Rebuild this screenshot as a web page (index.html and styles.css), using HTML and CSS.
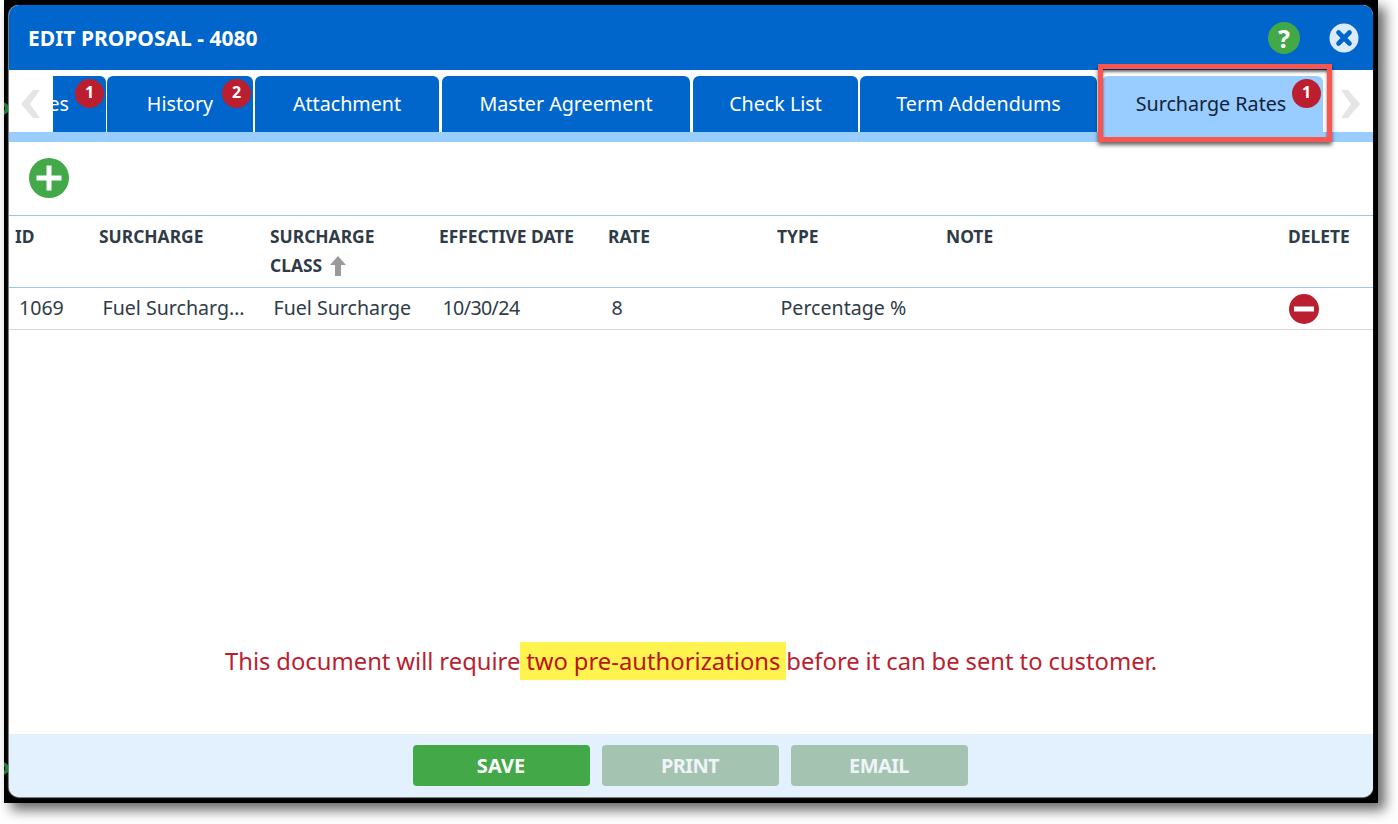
FILE: index.html
```html
<!DOCTYPE html>
<html lang="en">
<head>
<meta charset="utf-8">
<title>Edit Proposal - 4080</title>
<link rel="stylesheet" href="styles.css">
</head>
<body>
<div class="frame">
  <span class="behind-ring behind-ring-top"></span>
  <span class="behind-ring behind-ring-bottom"></span>
  <div class="modal">
    <header class="modal-header">
      <h1 class="modal-title">EDIT PROPOSAL - 4080</h1>
      <div class="header-actions">
        <span class="help-icon">?</span>
        <svg class="close-icon" viewBox="0 0 30 30" width="30" height="30" aria-label="Close">
          <circle cx="15" cy="15" r="14.5" fill="#dcebfa"/>
          <path d="M9.5 9.5 L20.5 20.5 M20.5 9.5 L9.5 20.5" stroke="#0066cc" stroke-width="4.6" stroke-linecap="round"/>
        </svg>
      </div>
    </header>
    <nav class="tabbar">
      <div class="arrow arrow-prev">
        <svg viewBox="0 0 20 30" width="20" height="30"><polygon points="13,1 20,1 10,15 20,29 13,29 1,15" fill="#e5e5e5"/></svg>
      </div>
      <div class="tabs">
        <div class="tab tab-clipped">es<span class="badge badge-clipped">1</span></div>
        <div class="tab tab-history">History<span class="badge">2</span></div>
        <div class="tab tab-attachment">Attachment</div>
        <div class="tab tab-master">Master Agreement</div>
        <div class="tab tab-check">Check List</div>
        <div class="tab tab-term">Term Addendums</div>
        <div class="tab tab-active">Surcharge Rates<span class="badge">1</span></div>
      </div>
      <div class="arrow arrow-next">
        <svg viewBox="0 0 20 30" width="20" height="30"><polygon points="7,1 0,1 10,15 0,29 7,29 19,15" fill="#e5e5e5"/></svg>
      </div>
      <span class="annotation"></span>
    </nav>
    <div class="strip"></div>
    <div class="toolbar">
      <svg viewBox="0 0 40 40" width="40" height="40" aria-label="Add">
        <circle cx="20" cy="20" r="20" fill="#43a847"/>
        <path d="M20 7.5 V32.5 M7.5 20 H32.5" stroke="#fff" stroke-width="5"/>
      </svg>
    </div>
    <table class="grid">
      <colgroup>
        <col class="c-id"><col class="c-sur"><col class="c-std"><col class="c-std"><col class="c-std"><col class="c-std"><col class="c-note"><col>
      </colgroup>
      <thead>
        <tr>
          <th>ID</th>
          <th>SURCHARGE</th>
          <th>SURCHARGE CLASS
            <svg class="sort-icon" viewBox="0 0 18 22" width="18" height="22"><path d="M9 1 L17 10 H12 V21 H6 V10 H1 Z" fill="#9a9a9a"/></svg>
          </th>
          <th>EFFECTIVE DATE</th>
          <th>RATE</th>
          <th>TYPE</th>
          <th>NOTE</th>
          <th>DELETE</th>
        </tr>
      </thead>
      <tbody>
        <tr>
          <td>1069</td>
          <td>Fuel Surcharg…</td>
          <td>Fuel Surcharge</td>
          <td class="cell-date">10/30/24</td>
          <td>8</td>
          <td>Percentage %</td>
          <td></td>
          <td class="cell-delete">
            <svg viewBox="0 0 30 30" width="30" height="30" aria-label="Delete">
              <circle cx="15" cy="15" r="15" fill="#bb1e2f"/>
              <rect x="5" y="12.5" width="20" height="5" fill="#fff"/>
            </svg>
          </td>
        </tr>
      </tbody>
    </table>
    <div class="spacer"></div>
    <p class="notice">This document will require<mark class="highlight"> two pre-authorizations </mark>before it can be sent to customer.</p>
    <footer class="modal-footer">
      <button class="btn btn-save">SAVE</button>
      <button class="btn btn-off">PRINT</button>
      <button class="btn btn-off">EMAIL</button>
    </footer>
  </div>
</div>
</body>
</html>
```
FILE: styles.css
```css
* { box-sizing: border-box; }
html, body { margin: 0; height: 100%; background: #fff; overflow: hidden; }
body { padding-left: 4px; font-family: "Noto Sans", sans-serif; color: #2f3b47; }

.frame {
  position: relative;
  width: 1374px;
  height: 803px;
  background: #000;
  padding: 5px 5px 6px 5px;
  box-shadow: 7px 7px 12px rgba(0, 0, 0, .6);
}
.behind-ring {
  position: absolute;
  left: -8px;
  width: 13px;
  height: 13px;
  border: 4px solid #1f7a33;
  border-radius: 50%;
  clip-path: inset(0 0 0 8px);
}
.behind-ring-top { top: 102px; }
.behind-ring-bottom { top: 762px; }

.modal {
  position: relative;
  display: flex;
  flex-direction: column;
  height: 792px;
  background: #fff;
  border-radius: 10px;
  box-shadow: -1px 0 1px #888, 0 1px 1px #888;
}

.modal-header {
  flex: none;
  height: 65px;
  display: flex;
  align-items: center;
  justify-content: space-between;
  padding: 0 14px 0 19px;
  background: #0066cc;
  border-radius: 10px 10px 0 0;
  color: #fff;
}
.modal-title { margin: 0; font-size: 21px; font-weight: 700; }
.header-actions { display: flex; align-items: center; gap: 29px; }
.help-icon {
  width: 32px;
  height: 32px;
  border-radius: 50%;
  background: #43a847;
  color: #fff;
  font-size: 25px;
  font-weight: 700;
  line-height: 32px;
  text-align: center;
}
.close-icon { display: block; }

.tabbar {
  position: relative;
  flex: none;
  height: 62px;
  display: flex;
  align-items: flex-end;
}
.arrow {
  align-self: flex-end;
  height: 56px;
  display: flex;
  align-items: center;
}
.arrow-prev { width: 44px; padding-left: 11px; background: #fff; }
.arrow-next { width: 49px; padding-left: 17px; }
.tabs { flex: 1; display: flex; height: 56px; }
.tab {
  position: relative;
  flex: none;
  height: 56px;
  background: #0066cc;
  color: #fff;
  font-size: 19.7px;
  line-height: 55px;
  text-align: center;
  border-radius: 6px 6px 0 0;
}
.tab-clipped {
  display: flex;
  justify-content: flex-end;
  width: 53px;
  padding-right: 37px;
  overflow: hidden;
  border-top-left-radius: 0;
  margin-right: 1px;
}
.tab-history { width: 146px; margin-right: 2px; }
.tab-attachment { width: 184px; margin-right: 3px; }
.tab-master { width: 248px; margin-right: 3px; }
.tab-check { width: 165px; margin-right: 2px; }
.tab-term { width: 237px; margin-right: 5px; }
.tab-active { width: 221px; padding-right: 3px; background: #99ccff; color: #12233a; }
.badge {
  position: absolute;
  top: 3px;
  right: 2px;
  width: 29px;
  height: 29px;
  border-radius: 50%;
  background: #bb1e2f;
  color: #fff;
  font-size: 16px;
  font-weight: 700;
  line-height: 27px;
  text-align: center;
}
.annotation {
  position: absolute;
  left: 1089px;
  top: -6px;
  width: 234px;
  height: 78px;
  border: 5px solid #f9564f;
  box-shadow: 0 3px 4px rgba(0, 0, 0, .6), inset 0 3px 3px rgba(0, 0, 0, .55);
}

.strip { flex: none; height: 10px; background: #99ccff; }
.toolbar { flex: none; height: 73px; padding: 16px 0 0 20px; }
.toolbar svg { display: block; }

.grid { flex: none; width: 100%; table-layout: fixed; border-collapse: collapse; }
.c-id { width: 84px; }
.c-sur { width: 171px; }
.c-std { width: 169px; }
.c-note { width: 342px; }
.grid th {
  height: 72px;
  padding: 6px 6px 0;
  font-size: 17.4px;
  font-weight: 700;
  line-height: 29px;
  text-align: left;
  vertical-align: top;
  border-top: 1px solid #99c5f0;
  border-bottom: 1px solid #99c5f0;
}
.sort-icon { vertical-align: -5px; margin-left: 2px; filter: blur(.6px); }
.grid td {
  height: 42px;
  padding: 0 6px 2px 9.5px;
  font-size: 19.6px;
  line-height: 38px;
  white-space: nowrap;
  border-bottom: 1px solid #d8d8d8;
}
.grid td:first-child { padding-left: 10px; }
.cell-date { letter-spacing: -.6px; }
.grid td svg { display: block; margin-left: -3px; margin-top: 2px; }
.cell-delete { padding-left: 6px; }

.spacer { flex: 1; }
.notice { flex: none; margin: 0 0 54px; font-size: 23.8px; word-spacing: -.3px; line-height: 38px; color: #bb1e2f; text-align: center; }
.highlight { padding: 3px 0; background: #fff34f; color: #bb1414; }

.modal-footer {
  flex: none;
  height: 63px;
  display: flex;
  gap: 12px;
  justify-content: center;
  padding-top: 11px;
  padding-right: 2px;
  background: #e3f0fd;
  border-radius: 0 0 10px 10px;
}
.btn {
  width: 177px;
  height: 41px;
  border: 0;
  border-radius: 4px;
  color: #fff;
  font-family: "Noto Sans", sans-serif;
  font-size: 20px;
  font-weight: 700;
}
.btn-save { background: #43a847; }
.btn-off { background: #a4c3b0; color: #eef4f8; letter-spacing: -.6px; }
```
